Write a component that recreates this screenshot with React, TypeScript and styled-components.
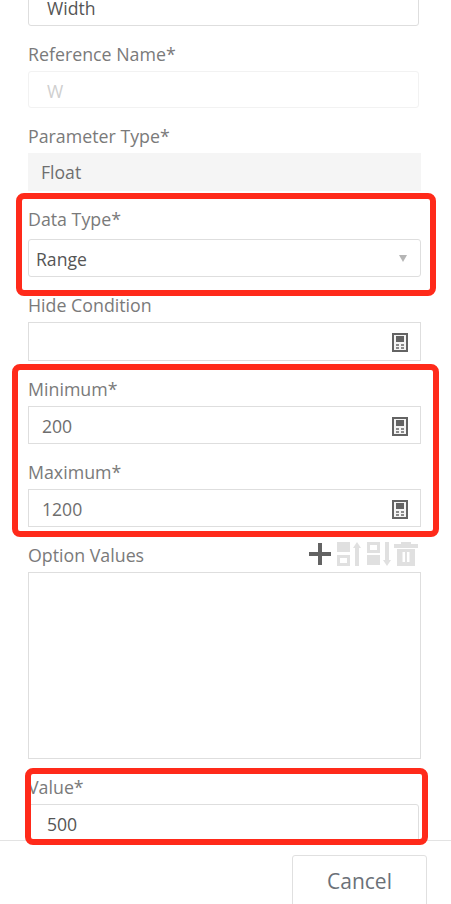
import React from 'react';
import styled, { createGlobalStyle } from 'styled-components';

const Global = createGlobalStyle`
  html, body { margin: 0; padding: 0; background: #fff; }
  body { font-family: "Open Sans", "Noto Sans", sans-serif; overflow: hidden; }
`;

const Page = styled.div`
  position: relative;
  width: 451px;
  height: 904px;
  display: flex;
  flex-direction: column;
  overflow: hidden;
`;
const ScrollArea = styled.div`
  height: 840px;
  overflow: hidden;
  flex: none;
`;
const Form = styled.div`
  margin-top: -14px;
  padding-left: 28px;
  width: 393px;
  display: flex;
  flex-direction: column;
  gap: 20px;
`;
const Label = styled.div<{ $gap?: number }>`
  height: 17px;
  line-height: 17px;
  font-size: 17.8px;
  color: #7a7a7a;
  margin-bottom: ${p => p.$gap ?? 8}px;
  white-space: nowrap;
`;
const Box = styled.div<{ $h?: number; $narrow?: boolean; $pad?: number; $top?: number; $color?: string; $round?: boolean }>`
  box-sizing: border-box;
  height: ${p => p.$h ?? 38}px;
  width: ${p => (p.$narrow ? '391px' : '393px')};
  border: 1px solid #dedede;
  border-radius: ${p => (p.$round ? 3 : 0)}px;
  padding: ${p => p.$top ?? 2}px 12px 0 ${p => p.$pad ?? 13}px;
  display: flex;
  align-items: center;
  justify-content: space-between;
  font-size: 17.6px;
  color: ${p => p.$color ?? '#6e6e6e'};
  background: #fff;
`;
const FaintBox = styled(Box)`
  border-color: #f2f2f2;
  color: #cfcfcf;
`;
const ReadOnlyBox = styled(Box)`
  border: none;
  background: #f5f5f5;
`;
const LabelRow = styled.div`
  display: flex;
  justify-content: space-between;
  align-items: flex-start;
  padding-right: 3px;
  height: 25px;
`;
const Tools = styled.div`
  display: flex;
  margin-top: -5px;
`;
const ToolIcon = styled.svg<{ $gap?: number }>`
  display: block;
  width: 24px;
  height: 24px;
  margin-left: ${p => p.$gap ?? 0}px;
`;
const Caret = styled.span`
  width: 0;
  height: 0;
  border-left: 4px solid transparent;
  border-right: 4px solid transparent;
  border-top: 7px solid #b5b5b5;
  margin: -1px 1px 0 0;
`;
const Footer = styled.div`
  flex: 1;
  border-top: 1px solid #e3e3e3;
  display: flex;
  justify-content: flex-end;
  align-items: flex-start;
  padding: 14px 24px 0 0;
`;
const CancelButton = styled.button`
  box-sizing: border-box;
  width: 135px;
  height: 60px;
  border: 1px solid #e0e0e0;
  border-radius: 3px;
  background: #fff;
  font-family: inherit;
  font-size: 21px;
  color: #6b7178;
  padding: 0 0 8px;
`;
const Mark = styled.div<{ $x: number; $y: number; $w: number; $h: number }>`
  position: absolute;
  box-sizing: border-box;
  left: ${p => p.$x}px;
  top: ${p => p.$y}px;
  width: ${p => p.$w}px;
  height: ${p => p.$h}px;
  border: 6px solid #ff2a1a;
  border-radius: 8px;
  pointer-events: none;
`;

const Calc = () => (
  <svg width="16" height="19" viewBox="0 0 16 19" style={{ flex: 'none', display: 'block' }}>
    <rect x="1" y="1" width="14" height="17" fill="#f4f4f4" stroke="#636363" strokeWidth="2" />
    <rect x="4" y="3" width="8" height="6" fill="#636363" />
    <rect x="4" y="11" width="3" height="2" fill="#8a8a8a" />
    <rect x="9" y="11" width="3" height="2" fill="#8a8a8a" />
    <rect x="4" y="14" width="3" height="2" fill="#8a8a8a" />
    <rect x="9" y="14" width="3" height="2" fill="#8a8a8a" />
  </svg>
);

const IDLE = '#e0e0e0';

const App: React.FC = () => (
  <Page>
    <Global />
    <ScrollArea>
      <Form>
        <Box $narrow $round $pad={18} $top={3} $h={40} $color="#555">Width</Box>
        <div>
          <Label>Reference Name*</Label>
          <FaintBox $narrow $round $pad={18} $h={37}>W</FaintBox>
        </div>
        <div>
          <Label>Parameter Type*</Label>
          <ReadOnlyBox $top={0}>Float</ReadOnlyBox>
        </div>
        <div>
          <Label $gap={11}>Data Type*</Label>
          <Box $round $pad={7} $top={1} $color="#555">Range<Caret /></Box>
        </div>
        <div>
          <Label>Hide Condition</Label>
          <Box $h={39}><span /><Calc /></Box>
        </div>
        <div>
          <Label>Minimum*</Label>
          <Box>200<Calc /></Box>
        </div>
        <div>
          <Label>Maximum*</Label>
          <Box>1200<Calc /></Box>
        </div>
        <div>
          <LabelRow>
            <Label>Option Values</Label>
            <Tools>
              <ToolIcon viewBox="0 0 24 24">
                <path d="M10 1h4v9h9v4h-9v9h-4v-9H1v-4h9z" fill="#636363" />
              </ToolIcon>
              <ToolIcon viewBox="0 0 24 24" $gap={5}>
                <rect x="0" y="0" width="13" height="10" fill={IDLE} />
                <rect x="1.5" y="14.5" width="10" height="8" fill="none" stroke={IDLE} strokeWidth="3" />
                <path d="M20 0l4 6h-2v18h-4V6h-2z" fill={IDLE} />
              </ToolIcon>
              <ToolIcon viewBox="0 0 24 24" $gap={6}>
                <rect x="1.5" y="1.5" width="10" height="8" fill="none" stroke={IDLE} strokeWidth="3" />
                <rect x="0" y="13" width="13" height="10" fill={IDLE} />
                <path d="M18 0h4v18h2l-4 6-4-6h2z" fill={IDLE} />
              </ToolIcon>
              <ToolIcon viewBox="0 0 24 24" $gap={3}>
                <path d="M7 0h10v2h7v4H0V2h7zM3 7h18v17H3zM8.5 10v10h2.5V10zm4.5 0v10h2.5V10z" fill={IDLE} fillRule="evenodd" />
              </ToolIcon>
            </Tools>
          </LabelRow>
          <Box $h={187} />
        </div>
        <div>
          <Label>Value*</Label>
          <Box $narrow $round $pad={18} $top={0} $color="#555" $h={39}>500</Box>
        </div>
      </Form>
    </ScrollArea>
    <Footer>
      <CancelButton>Cancel</CancelButton>
    </Footer>
    <Mark $x={16} $y={193} $w={420} $h={103} />
    <Mark $x={12} $y={364} $w={427} $h={173} />
    <Mark $x={25} $y={768} $w={403} $h={77} />
  </Page>
);

export default App;
